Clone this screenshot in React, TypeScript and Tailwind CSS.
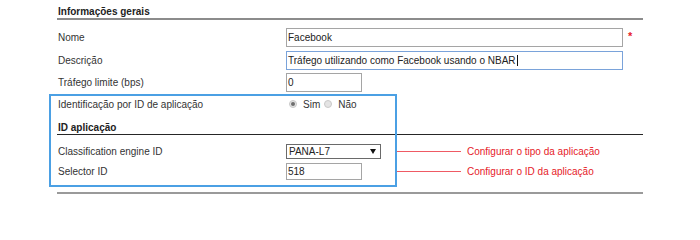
import React from "react";

function TextBox({
  value,
  width,
  height = 19,
  focused = false,
  caret = false,
}: {
  value: string;
  width: string;
  height?: number;
  focused?: boolean;
  caret?: boolean;
}) {
  return (
    <div
      className={`${width} ${height === 19 ? "h-[19px]" : "h-[17px]"} border ${
        focused ? "border-[#7aa3da]" : "border-[#a5a5a5]"
      } bg-white flex items-center pl-[1px] text-[10px] text-[#222] leading-none`}
    >
      <span>{value}</span>
      {caret && <span className="ml-[1px] w-px h-[11px] bg-[#111]" />}
    </div>
  );
}

function Radio({ checked }: { checked: boolean }) {
  return (
    <span className="w-[8px] h-[8px] rounded-full border border-[#c9c9c9] bg-[#e4e4e4] flex items-center justify-center">
      {checked && <span className="w-[4px] h-[4px] rounded-full bg-[#6e6e6e]" />}
    </span>
  );
}

function Annotation({ text }: { text: string }) {
  return (
    <div className="flex items-center">
      <span className="w-[64px] h-px bg-[#ef5a64]" />
      <span className="ml-[6px] text-[#e62129] text-[10px]">{text}</span>
    </div>
  );
}

export default function App() {
  return (
    <div className="relative w-[700px] h-[202px] bg-white text-[10px] text-[#333] font-['Liberation_Sans',Arial,sans-serif] overflow-hidden">
      <div className="ml-[57px] w-[586px] flex flex-col">
        {/* Header */}
        <div className="h-[20px] border-b-2 border-[#8c8c8c] flex items-end">
          <span className="leading-[12px] font-bold text-[#222] pl-[1px]">Informações gerais</span>
        </div>

        <div className="mt-[8px] h-[19px] flex items-center">
          <span className="w-[229px] pl-[1px]">Nome</span>
          <TextBox value="Facebook" width="w-[337px]" />
          <span className="ml-[5px] self-start mt-[2px] text-[#e62129] font-bold text-[11px] leading-[12px]">*</span>
        </div>

        <div className="mt-[4px] h-[19px] flex items-center">
          <span className="w-[229px] pl-[1px]">Descrição</span>
          <TextBox
            value="Tráfego utilizando como Facebook usando o NBAR"
            width="w-[337px]"
            focused
            caret
          />
        </div>

        <div className="mt-[3px] h-[19px] flex items-center">
          <span className="w-[229px] pl-[1px]">Tráfego limite (bps)</span>
          <TextBox value="0" width="w-[76px]" />
        </div>

        <div className="mt-[1px] h-[22px] flex items-center">
          <span className="w-[229px] pl-[1px]">Identificação por ID de aplicação</span>
          <div className="flex items-center ml-[3px]">
            <Radio checked />
            <span className="ml-[6px]">Sim</span>
            <span className="ml-[4px]"><Radio checked={false} /></span>
            <span className="ml-[6px]">Não</span>
          </div>
        </div>

        <div className="h-[20px] border-b border-[#262626] flex items-end">
          <span className="leading-[12px] font-bold text-[#222] pl-[1px]">ID aplicação</span>
        </div>

        <div className="mt-[9px] h-[15px] flex items-center">
          <span className="w-[229px] pl-[1px]">Classification engine ID</span>
          <div className="w-[111px] flex">
            <div className="w-[95px] h-[15px] border border-[#6a6a6a] bg-white flex items-center justify-between pl-[2px] pr-[4px] text-[#222]">
              <span className="leading-none">PANA-L7</span>
              <svg width="6" height="5" viewBox="0 0 6 5">
                <path d="M0 0 H6 L3 5 Z" fill="#111" />
              </svg>
            </div>
          </div>
          <Annotation text="Configurar o tipo da aplicação" />
        </div>

        <div className="mt-[4px] h-[17px] flex items-center">
          <span className="w-[229px] pl-[1px]">Selector ID</span>
          <div className="w-[111px] flex">
            <TextBox value="518" width="w-[76px]" height={17} />
          </div>
          <Annotation text="Configurar o ID da aplicação" />
        </div>

        <div className="mt-[12px] border-t-2 border-[#9a9a9a]" />
      </div>

      <div className="absolute left-[49px] top-[94px] w-[348px] h-[93px] border-2 border-[#4ba0e4] pointer-events-none" />
    </div>
  );
}
